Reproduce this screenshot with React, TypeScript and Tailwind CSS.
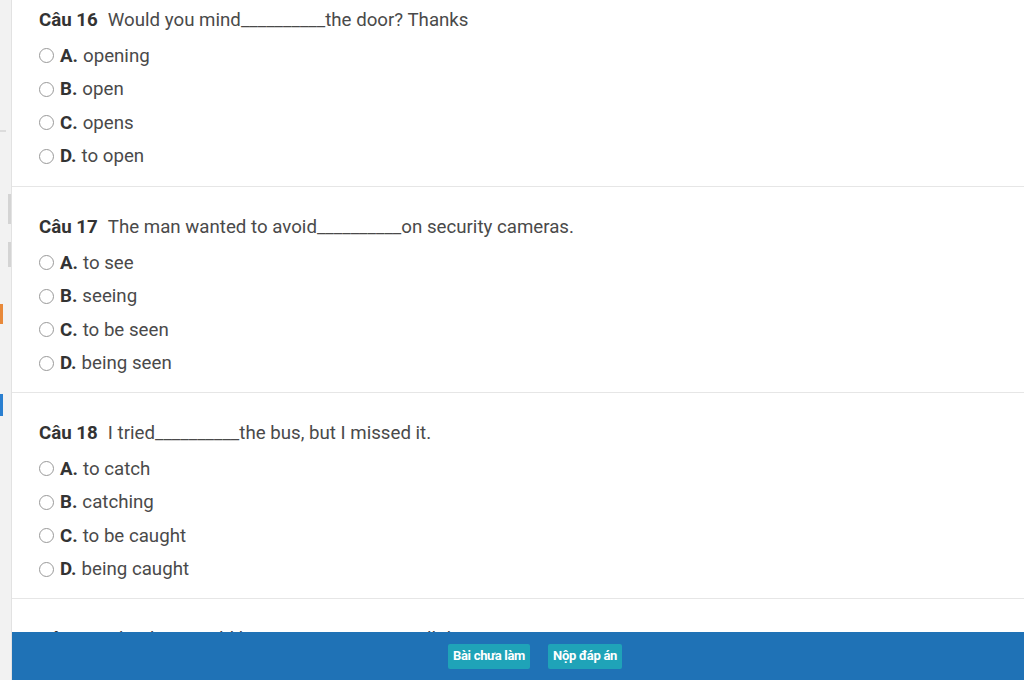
import React from "react";

type Q = { num: number; parts: [string, string]; options: string[] };

const questions: Q[] = [
  { num: 16, parts: ["Would you mind", "the door? Thanks"], options: ["opening", "open", "opens", "to open"] },
  { num: 17, parts: ["The man wanted to avoid", "on security cameras."], options: ["to see", "seeing", "to be seen", "being seen"] },
  { num: 18, parts: ["I tried", "the bus, but I missed it."], options: ["to catch", "catching", "to be caught", "being caught"] },
  { num: 19, parts: ["The doctor told him to stop", "all the time."], options: ["smoking", "to smoke", "smoke", "smoked"] },
];

const letters = ["A", "B", "C", "D"];

function Block({ q, first }: { q: Q; first: boolean }) {
  return (
    <div className={first ? "pt-[8px] pb-[13px]" : "border-t border-[#e6e6e6] pt-[28px] pb-[12px]"}>
      <div className="h-[24px] leading-[24px] pl-[27px] text-[18.7px] text-[#4a4a4a] whitespace-nowrap">
        <span className="font-bold text-[#333]">Câu {q.num}</span>
        <span className="ml-[10px]">{q.parts[0]}</span>
        <span>__________</span>
        <span>{q.parts[1]}</span>
      </div>
      <div className="mt-[7px] flex flex-col">
        {q.options.map((o, i) => (
          <div key={i} className="h-[33.5px] flex items-center pl-[27px] text-[18.7px] text-[#4a4a4a] whitespace-nowrap">
            <span className="w-[15px] h-[15px] rounded-full border border-[#999] bg-white mr-[6px] shrink-0" />
            <span className="font-bold text-[#333]">{letters[i]}.</span>
            <span className="ml-[5px]">{o}</span>
          </div>
        ))}
      </div>
    </div>
  );
}

export default function App() {
  return (
    <div
      className="w-[1024px] h-[680px] overflow-hidden flex bg-white relative"
      style={{ fontFamily: "Roboto, 'Liberation Sans', sans-serif" }}
    >
      <div className="w-[12px] shrink-0 bg-[#f2f2f2] border-r border-[#e2e2e2] flex flex-col">
        <div className="h-[130px]" />
        <div className="w-[6px] h-[2px] bg-[#dcdcdc]" />
        <div className="h-[62px]" />
        <div className="ml-[8px] w-[3px] h-[30px] bg-[#d4d4d4]" />
        <div className="h-[18px]" />
        <div className="ml-[8px] w-[3px] h-[25px] bg-[#d4d4d4]" />
        <div className="h-[37px]" />
        <div className="w-[3px] h-[20px] bg-[#e8893a]" />
        <div className="h-[70px]" />
        <div className="w-[3px] h-[22px] bg-[#2a7fd0]" />
      </div>
      <div className="flex-1 flex flex-col">
        {questions.map((q, i) => (
          <Block key={q.num} q={q} first={i === 0} />
        ))}
      </div>
      <div className="fixed bottom-0 left-[12px] right-0 h-[48px] bg-[#1f72b6] flex items-center justify-center pl-[34px] gap-[18px]">
        <button className="h-[25px] px-[5px] bg-[#1fa3b8] text-white text-[13px] font-bold rounded-[2px] tracking-[-0.3px]">
          Bài chưa làm
        </button>
        <button className="h-[25px] px-[5px] bg-[#1fa3b8] text-white text-[13px] font-bold rounded-[2px] tracking-[-0.3px]">
          Nộp đáp án
        </button>
      </div>
    </div>
  );
}
